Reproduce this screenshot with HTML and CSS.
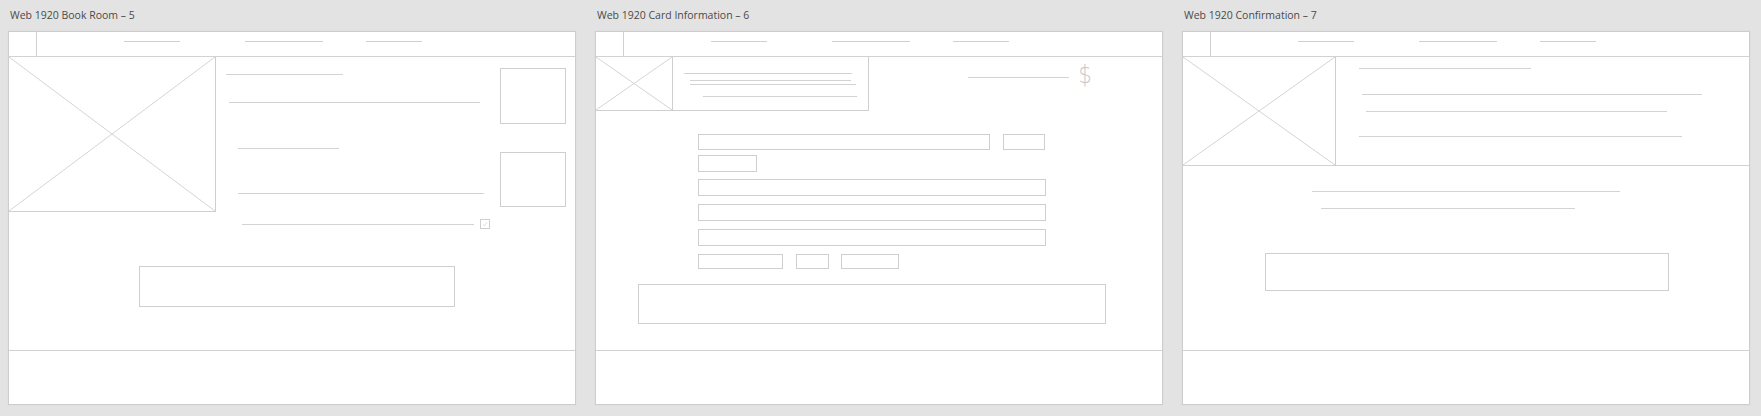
FILE: index.html
```html
<!DOCTYPE html>
<html>
<head>
<meta charset="utf-8">
<link rel="stylesheet" href="styles.css">
</head>
<body>
<div class="board">

  <section class="artboard">
    <div class="title">Web 1920 Book Room – 5</div>
    <div class="frame">
      <div class="header">
        <div class="logo-cell"></div>
        <div class="nav"><span class="nav1"></span><span class="nav2"></span><span class="nav3"></span></div>
      </div>
      <div class="content">
        <div class="room-top">
          <div class="ph room-img">
            <svg viewBox="0 0 100 100" preserveAspectRatio="none"><line x1="0" y1="0" x2="100" y2="100"/><line x1="100" y1="0" x2="0" y2="100"/></svg>
          </div>
          <div class="room-info">
            <div class="ln r1"></div>
            <div class="ln r2"></div>
            <div class="ln r3"></div>
            <div class="ln r4"></div>
            <div class="check-row">
              <div class="ln r5"></div>
              <div class="checkbox">
                <svg viewBox="0 0 10 10"><path d="M2.5 5.5 L4.2 7 L7.5 3"/></svg>
              </div>
            </div>
          </div>
          <div class="room-side">
            <div class="box sq1"></div>
            <div class="box sq2"></div>
          </div>
        </div>
        <div class="box btn room-btn"></div>
      </div>
      <div class="footer"></div>
    </div>
  </section>

  <section class="artboard">
    <div class="title">Web 1920 Card Information – 6</div>
    <div class="frame">
      <div class="header">
        <div class="logo-cell"></div>
        <div class="nav"><span class="nav1"></span><span class="nav2"></span><span class="nav3"></span></div>
      </div>
      <div class="content">
        <div class="card-top">
          <div class="card">
            <div class="ph card-img">
              <svg viewBox="0 0 100 100" preserveAspectRatio="none"><line x1="0" y1="0" x2="100" y2="100"/><line x1="100" y1="0" x2="0" y2="100"/></svg>
            </div>
            <div class="card-text">
              <div class="ln ca"></div>
              <div class="ln cb"></div>
              <div class="ln cc"></div>
              <div class="ln cd"></div>
            </div>
          </div>
          <div class="price">
            <div class="ln price-ln"></div>
            <span class="dollar">$</span>
          </div>
        </div>
        <div class="form">
          <div class="frow row1"><div class="box f-num"></div><div class="box f-cvv"></div></div>
          <div class="frow row2"><div class="box f-exp"></div></div>
          <div class="frow row3"><div class="box f-full"></div></div>
          <div class="frow row4"><div class="box f-full"></div></div>
          <div class="frow row5"><div class="box f-full"></div></div>
          <div class="frow row6"><div class="box f-city"></div><div class="box f-st"></div><div class="box f-zip"></div></div>
        </div>
        <div class="box btn card-btn"></div>
      </div>
      <div class="footer"></div>
    </div>
  </section>

  <section class="artboard">
    <div class="title">Web 1920 Confirmation – 7</div>
    <div class="frame">
      <div class="header">
        <div class="logo-cell"></div>
        <div class="nav"><span class="nav1"></span><span class="nav2"></span><span class="nav3"></span></div>
      </div>
      <div class="content">
        <div class="conf-top">
          <div class="ph conf-img">
            <svg viewBox="0 0 100 100" preserveAspectRatio="none"><line x1="0" y1="0" x2="100" y2="100"/><line x1="100" y1="0" x2="0" y2="100"/></svg>
          </div>
          <div class="conf-info">
            <div class="ln k1"></div>
            <div class="ln k2"></div>
            <div class="ln k3"></div>
            <div class="ln k4"></div>
          </div>
        </div>
        <div class="conf-body">
          <div class="ln m1"></div>
          <div class="ln m2"></div>
          <div class="box btn conf-btn"></div>
        </div>
      </div>
      <div class="footer"></div>
    </div>
  </section>

</div>
</body>
</html>
```
FILE: styles.css
```css
* { box-sizing: border-box; }
html, body { margin: 0; padding: 0; }
body {
  background: #e3e3e3;
  width: 1761px;
  height: 416px;
  overflow: hidden;
  font-family: "Open Sans", "Noto Sans", "Liberation Sans", sans-serif;
}
.board {
  display: flex;
  gap: 19px;
  padding-left: 8px;
}
.artboard {
  width: 568px;
  display: flex;
  flex-direction: column;
}
.title {
  height: 31px;
  padding: 8px 0 0 2px;
  font-size: 10.5px;
  line-height: 14px;
  color: #4a4a4a;
  white-space: nowrap;
}
.frame {
  height: 374px;
  background: #fff;
  border: 1px solid #cdcdcd;
  box-shadow: 0 0 1px rgba(0,0,0,0.08);
  display: flex;
  flex-direction: column;
}
.header {
  height: 25px;
  border-bottom: 1px solid #d2d2d2;
  display: flex;
}
.logo-cell {
  width: 28px;
  border-right: 1px solid #d2d2d2;
}
.nav {
  display: flex;
  align-items: flex-start;
  padding-top: 9px;
}
.nav span { display: block; height: 1px; background: #cfcfcf; }
.nav1 { width: 56px; margin-left: 87px; }
.nav2 { width: 78px; margin-left: 65px; }
.nav3 { width: 56px; margin-left: 43px; }

.content {
  flex: 1;
  display: flex;
  flex-direction: column;
}
.footer {
  height: 54px;
  border-top: 1px solid #d2d2d2;
}
.ln { height: 1px; background: #d3d3d3; }
.box { border: 1px solid #cfcfcf; background: #fff; }
.ph { border: 1px solid #cfcfcf; position: relative; }
.ph svg { display: block; width: 100%; height: 100%; }
.ph line { stroke: #d4d4d4; stroke-width: 1; vector-effect: non-scaling-stroke; }

/* Book room */
.room-top { display: flex; align-items: flex-start; }
.room-img { width: 207px; height: 155px; border-top: none; border-left: none; }
.room-info { width: 284px; display: flex; flex-direction: column; }
.r1 { margin: 17px 0 0 10px; width: 117px; }
.r2 { margin: 27px 0 0 13px; width: 251px; }
.r3 { margin: 45px 0 0 22px; width: 101px; }
.r4 { margin: 44px 0 0 22px; width: 246px; }
.check-row { display: flex; align-items: center; margin-top: 25px; }
.r5 { margin-left: 26px; width: 232px; }
.checkbox { width: 10px; height: 10px; margin-left: 6px; border: 1px solid #cfcfcf; }
.checkbox svg { display: block; width: 8px; height: 8px; }
.checkbox path { fill: none; stroke: #d0d0d0; stroke-width: 0.9; }
.room-side { display: flex; flex-direction: column; }
.sq1 { width: 66px; height: 56px; margin-top: 11px; }
.sq2 { width: 66px; height: 55px; margin-top: 28px; }
.room-btn { width: 316px; height: 41px; margin: 37px 0 0 130px; }

/* Card information */
.card-top { display: flex; align-items: flex-start; }
.card { width: 273px; height: 54px; border: 1px solid #cfcfcf; border-left: none; border-top: none; display: flex; }
.card-img { width: 77px; height: 53px; border: none; border-right: 1px solid #cfcfcf; }
.card-text { display: flex; flex-direction: column; }
.ca { margin: 16px 0 0 11px; width: 168px; }
.cb { margin: 6px 0 0 17px; width: 161px; }
.cc { margin: 3px 0 0 17px; width: 166px; }
.cd { margin: 11px 0 0 30px; width: 154px; }
.price { display: flex; align-items: flex-start; margin-left: 99px; }
.price-ln { width: 101px; margin-top: 20px; }
.dollar {
  margin: 3px 0 0 8px;
  font-family: "DejaVu Sans", sans-serif;
  font-weight: 200;
  font-size: 25px;
  line-height: 30px;
  color: #c8c8c8;
  transform: scaleX(0.85);
}
.form { display: flex; flex-direction: column; margin: 23px 0 0 102px; }
.frow { display: flex; }
.row1 { gap: 13px; }
.row2 { margin-top: 5px; }
.row3 { margin-top: 7px; }
.row4, .row5 { margin-top: 8px; }
.row6 { margin-top: 8px; gap: 13px; }
.f-num { width: 292px; height: 16px; }
.f-cvv { width: 42px; height: 16px; }
.f-exp { width: 59px; height: 17px; }
.f-full { width: 348px; height: 17px; }
.f-city { width: 85px; height: 15px; }
.f-st { width: 33px; height: 15px; }
.f-zip { width: 58px; height: 15px; margin-left: -1px; }
.card-btn { width: 468px; height: 40px; margin: 15px 0 0 42px; }

/* Confirmation */
.conf-top { display: flex; height: 109px; border-bottom: 1px solid #d2d2d2; }
.conf-img { width: 153px; height: 108px; border: none; border-right: 1px solid #cfcfcf; }
.conf-info { display: flex; flex-direction: column; }
.k1 { margin: 11px 0 0 23px; width: 172px; }
.k2 { margin: 25px 0 0 26px; width: 340px; }
.k3 { margin: 16px 0 0 30px; width: 301px; }
.k4 { margin: 24px 0 0 23px; width: 323px; }
.conf-body { display: flex; flex-direction: column; }
.m1 { margin: 25px 0 0 129px; width: 308px; }
.m2 { margin: 16px 0 0 138px; width: 254px; }
.conf-btn { width: 404px; height: 38px; margin: 44px 0 0 82px; }
```
